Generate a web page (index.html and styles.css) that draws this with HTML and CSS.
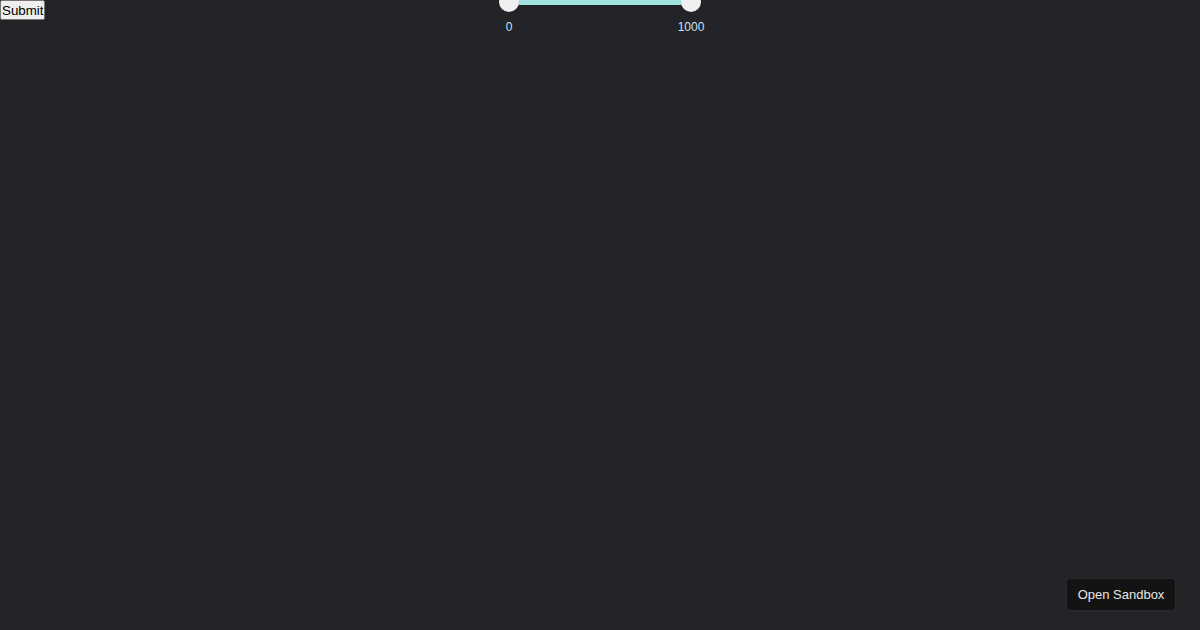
FILE: index.html
```html
<!DOCTYPE html>
<html lang="en">
<head>
<meta charset="utf-8">
<title>Range</title>
<link rel="stylesheet" href="styles.css">
</head>
<body>
<div class="top">
  <div class="left"><button class="submit" type="button">Submit</button></div>
  <div class="slider">
    <div class="rail">
      <div class="track"></div>
      <span class="thumb thumb-min"></span>
      <span class="thumb thumb-max"></span>
    </div>
    <div class="labels">
      <span class="label">0</span>
      <span class="label">1000</span>
    </div>
  </div>
  <div class="right"></div>
</div>
<button class="sandbox" type="button">Open Sandbox</button>
</body>
</html>
```
FILE: styles.css
```css
html, body {
  margin: 0;
  padding: 0;
  height: 100%;
}
body {
  background: #232427;
  font-family: "Liberation Sans", Arial, sans-serif;
  overflow: hidden;
}
.top {
  display: grid;
  grid-template-columns: 1fr 202px 1fr;
  align-items: start;
}
.submit {
  font: 13.333px "Liberation Sans", Arial, sans-serif;
  color: #000;
  background: #efefef;
  border: 1px solid #767676;
  border-radius: 2px;
  padding: 2px 1px 0;
  margin: 0;
  height: 20px;
  width: 45px;
  line-height: 16px;
}
.slider {
  width: 202px;
  margin-top: -8px;
}
.rail {
  position: relative;
  height: 20px;
}
.track {
  position: absolute;
  left: 10px;
  right: 10px;
  top: 5px;
  height: 8px;
  background: #9fe5df;
}
.thumb {
  position: absolute;
  top: 0;
  width: 20px;
  height: 20px;
  border-radius: 50%;
  background: #f0f0f0;
  box-shadow: 0 0 1px rgba(0,0,0,0.4);
}
.thumb-min { left: 0; }
.thumb-max { right: 0; }
.labels {
  display: flex;
  justify-content: space-between;
  margin-top: 8px;
}
.label {
  width: 40px;
  margin: 0 -10px;
  text-align: center;
  font-size: 12px;
  line-height: 14px;
  color: #c7e2fb;
}
.sandbox {
  position: fixed;
  right: 24px;
  bottom: 19px;
  width: 110px;
  height: 33px;
  background: #131313;
  border: 1px solid #2c2c2c;
  border-radius: 4px;
  color: #e6e6e6;
  font: 13px "Liberation Sans", Arial, sans-serif;
  padding: 0;
  cursor: pointer;
}
```
